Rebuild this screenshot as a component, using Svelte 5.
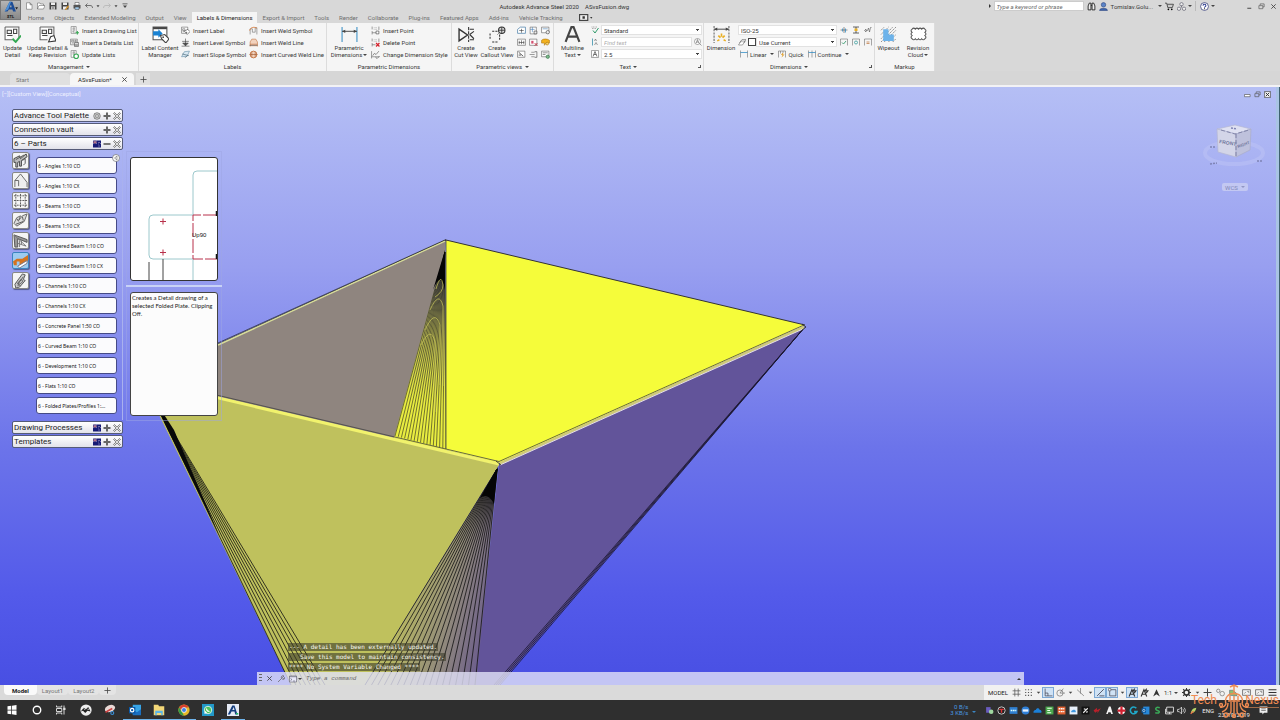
<script>
  const icons = {
    newdoc: '<path d="M3 1.500h7l4 4v9H3z M10 1.500v4h4" fill="#fff" stroke="#555"/>',
    open: '<path d="M1 14V2h5l1 2h6v3M1 14l3-7h12l-3 7z" fill="#fff" stroke="#555"/>',
    save: '<path d="M1 1h14v14H1z" fill="#444"/><path d="M4 1h8v5H4zM4 9h8v6H4z" fill="#eee"/><path d="M5 11h6M5 13h6" stroke="#444"/>',
    saveas: '<path d="M1 1h14v14H1z" fill="#444"/><path d="M4 1h8v5H4zM4 9h8v6H4z" fill="#eee"/><path d="M8 15l6-8 2 2-6 7z" fill="#e8a331" stroke="#8a5a10" stroke-width=".6"/>',
    print: '<path d="M4 1h8v5H4z" fill="#fff" stroke="#444"/><path d="M1 6h14v7H1z" fill="#555"/><path d="M4 10h8v5H4z" fill="#9fc7e8" stroke="#444"/>',
    undo: '<path d="M5 3L1 7l4 4M1 7h9c4 0 5 2 5 5" fill="none" stroke="#555" stroke-width="1.600"/>',
    redo: '<path d="M11 3l4 4-4 4M15 7H6c-4 0-5 2-5 5" fill="none" stroke="#b5b5b5" stroke-width="1.600"/>',
    caret: '<path d="M4 6h8l-4 5z" fill="#444"/>',
    caretbar: '<path d="M3 3h10v1.500H3zM4 7h8l-4 5z" fill="#444"/>',
    update: '<path d="M1 1h13v10M1 1v12h7" fill="#fff" stroke="#666"/><path d="M3 4h4v3H3zM9 3h3v4H9zM3 9h5" fill="none" stroke="#444"/><path d="M8 12l3 3 5-6" fill="none" stroke="#35a853" stroke-width="1.800"/>',
    updaterev: '<path d="M1 1h13v10M1 1v12h7" fill="#fff" stroke="#666"/><path d="M3 4h4v3H3zM9 3h3v4H9zM3 9h5" fill="none" stroke="#444"/><path d="M9 15l2-5 3-1 2 5z" fill="#fff" stroke="#333"/>',
    listd: '<path d="M2 1h9v12H2z" fill="#fff" stroke="#666"/><path d="M4 4h5M4 7h5M4 10h3M7 1v12" stroke="#777"/><path d="M13 9v6M10 12h6" stroke="#35a853" stroke-width="2"/>',
    listt: '<path d="M1 2h12v10H1z" fill="#fff" stroke="#555"/><path d="M3 4h4v3H3zM9 4h2v3H9zM3 9h4" fill="none" stroke="#555"/><path d="M8 8h7v7H8z" fill="#fff" stroke="#333"/><path d="M9 11h5M9 13h5" stroke="#333"/>',
    listu: '<path d="M2 1h9v12H2z" fill="#fff" stroke="#666"/><path d="M4 4h5M4 7h5M7 1v12" stroke="#777"/><circle cx="11" cy="11" r="4" fill="#fff" stroke="#35a853" stroke-width="2"/>',
    content: '<path d="M1 1h13v12H1z" fill="#fff" stroke="#555"/><path d="M1 1h13v2H1z" fill="#444"/><path d="M1 5h5V3l4 4-4 4V9H1z" fill="#1a82d2"/><path d="M8 9l4-1 4 4-3 4-4-4z" fill="#fff" stroke="#444"/><circle cx="10.500" cy="10.500" r=".8" fill="#444"/>',
    label: '<path d="M1 2h11v11H1z" fill="#fff" stroke="#555"/><path d="M3 5h4v3H3zM3 10h3" fill="none" stroke="#555"/><path d="M6 9l6-3 4 4-5 5z" fill="#fff" stroke="#333"/><circle cx="10" cy="11" r="1" fill="#333"/>',
    level: '<path d="M8 1v12M3 9l5 5 5-5zM1 14.500h14M2 6h12" fill="#666" stroke="#333"/>',
    slope: '<path d="M1 12L6 3l9-1-4 9z" fill="#d9e8f2" stroke="#5b87a3"/><path d="M2 7l12 3M7 14l4-4" stroke="#356"/>',
    weld: '<path d="M2 15V5h4v6h5V3h3v12" fill="none" stroke="#666"/><path d="M1 8c2-6 8-7 13-4" fill="none" stroke="#d97a3a" stroke-width="1.600"/>',
    weldline: '<path d="M2 15V7l3-5h7l3 5v8M2 11h13" fill="#f2d2bd" stroke="#c06a34"/><path d="M1 13h14" stroke="#333"/>',
    weldcurve: '<circle cx="8" cy="8" r="6" fill="#f2d2bd" stroke="#c06a34" stroke-width="1.500"/><path d="M1 8h14M5 4v8M11 4v8" stroke="#9a4c20"/>',
    pdim: '<path d="M1 1v14M15 1v14" stroke="#3a8fc4"/><path d="M1 5h14" stroke="#555"/><path d="M1 5l3-1.500v3zM15 5l-3-1.500v3z" fill="#444"/>',
    ptins: '<path d="M2 1v5M2 9v6M14 1v6M2 12h12" stroke="#555"/><path d="M5 3h6M5 6h6" stroke="#777" stroke-dasharray="1 1"/><path d="M9 9h5v5H9z" fill="#fff" stroke="#333"/>',
    ptdel: '<path d="M2 1v5M2 9v6M14 1v6M2 12h6" stroke="#555"/><path d="M5 3h6M5 6h6" stroke="#777" stroke-dasharray="1 1"/><path d="M9 9l6 6M15 9l-6 6" stroke="#d3202a" stroke-width="2.200"/>',
    ptsty: '<path d="M1 2v13M1 12h14" stroke="#555"/><path d="M3 10l3-4 3 2 5-6" fill="none" stroke="#444"/><path d="M8 13l3 2 4-4" fill="none" stroke="#333"/>',
    cut: '<path d="M1 3v11l8-5.500z" fill="none" stroke="#333" stroke-width="1.300"/><path d="M10 1v14" stroke="#333" stroke-dasharray="3 1"/><path d="M11 3h4M11 13h4M11 8l4 4M11 8l4-3" stroke="#333"/>',
    callout: '<path d="M3 5h5M1 7v6M3 15h6M10 8v5" fill="none" stroke="#333" stroke-dasharray="2 1"/><circle cx="12" cy="4" r="3" fill="#ddd" stroke="#333"/><path d="M9 4h6M12 1v6M9 7l-1 1" stroke="#333" stroke-width=".8"/>',
    v1: '<path d="M1 6l5-4h9v11H1z" fill="#fff" stroke="#4b7fa8" stroke-width="1.300"/><path d="M4 8h8M8 5v7" stroke="#333"/>',
    v2: '<path d="M2 2h11v12H2z" fill="#fff" stroke="#555"/><path d="M2 6h8M6 2v9" stroke="#3a78b0"/><path d="M9 9h5v5H9z" fill="#eee" stroke="#333"/>',
    v3: '<path d="M1 2h13v10H1z" fill="#fff" stroke="#555"/><path d="M3 5h9" stroke="#3a78b0"/><circle cx="12" cy="11" r="3" fill="#eee" stroke="#333"/>',
    v4: '<path d="M1 2h14v11H1z" fill="#fff" stroke="#555"/><path d="M4 5v6M8 4v7M12 5v6M3 8h10" stroke="#333"/>',
    v5: '<path d="M1 2h13v11H1z" fill="#fff" stroke="#555"/><path d="M4 5h4v5H4z" fill="#d35070"/><path d="M10 9l5 5M15 9l-5 5" stroke="#c03040" stroke-width="1.600"/>',
    v6: '<path d="M1 4c3-3 10-3 14 0v5H9l-3 4V9H1z" fill="#f3b21f" stroke="#a8700a"/><circle cx="11" cy="10" r="2.500" fill="#f8d36a" stroke="#a8700a"/>',
    v7: '<path d="M1 2h13v11H1z" fill="#fff" stroke="#555"/><path d="M3 4l8 7M3 9h4" stroke="#333" stroke-width="1.400"/>',
    v8: '<path d="M1 8h9M4 4h6M4 12h6" stroke="#555"/><path d="M10 3h4v10h-4" fill="none" stroke="#333"/>',
    v9: '<path d="M1 2h13v10H1z" fill="#fff" stroke="#555"/><path d="M3 5h9M3 8h5" stroke="#444"/><circle cx="12" cy="12" r="3" fill="#7bb88a" stroke="#2c6b40"/>',
    mtext: '<path d="M1.500 15L7 1h2l5.500 14M4 10h8" fill="none" stroke="#444" stroke-width="2"/>',
    spell: '<path d="M1 2h12M2 5h9" stroke="#666" stroke-dasharray="2 1"/><path d="M4 9l4 5 7-10" fill="none" stroke="#2f9a6a" stroke-width="2"/>',
    talign: '<path d="M3 1v14" stroke="#2b8aa5" stroke-width="1.500"/><path d="M7 6l2-4 2 4M7 14l3-5 3 5" fill="none" stroke="#444"/>',
    tbox: '<path d="M1 1h14v14H1z" fill="#fff" stroke="#555"/><path d="M4 13l4-10 4 10M5.500 9h5" fill="none" stroke="#333" stroke-width="1.300"/>',
    dim: '<path d="M1 0v16M15 0v16" stroke="#666" stroke-dasharray="2 1"/><path d="M1 3h14" stroke="#555"/><path d="M1 3l3-1.500v3zM15 3l-3-1.500v3z" fill="#444"/><path d="M4 14l2-1M5 9l2 2M8 7v3M11 9l-2 2M12 14l-2-1" stroke="#eab024" stroke-width="1.500"/>',
    layers: '<path d="M1 14h8l5-8H6zM3 10l5-7h8l-4 7" fill="#fff" stroke="#555"/>',
    d1: '<path d="M1 8h14M8 2v12" stroke="#333"/><path d="M5 5v6M11 5v8" stroke="#2b8ac4" stroke-width="1.500"/>',
    d2: '<path d="M2 2h12M2 14h12M8 2v12" stroke="#333" stroke-width="1.500"/><path d="M5 5h6v5H5z" fill="#eab024"/>',
    d3: '<path d="M1 9l3-3v6zM4 9h3l2-5 2 8 2-9h2" fill="none" stroke="#555" stroke-width="1.200"/>',
    d4: '<path d="M1 15V2h14v13" fill="none" stroke="#555"/><path d="M4 9l3 3 5-6" fill="none" stroke="#2f9a6a" stroke-width="1.700"/>',
    d5: '<path d="M1 15V2h14v13" fill="none" stroke="#555"/><circle cx="8" cy="9" r="3" fill="none" stroke="#2f9a9a" stroke-width="1.500"/>',
    d6: '<path d="M1 15V2h14v13" fill="none" stroke="#555"/><path d="M5 8h6M5 11h6" stroke="#c07840" stroke-width="1.500"/>',
    linear: '<path d="M1 1v14M15 1v14" stroke="#555"/><path d="M1 5h14" stroke="#2b8ac4" stroke-width="1.500"/>',
    quick: '<path d="M1 15V2h14v13M5 2v5M10 2v4" fill="none" stroke="#555"/><path d="M9 6l-3 4h3l-2 5 6-6H9l2-3z" fill="#e09a20"/>',
    cont: '<path d="M1 1v14M8 1v14M15 1v14" stroke="#555"/><path d="M1 5h14" stroke="#2b8ac4" stroke-width="1.500"/>',
    wipeout: '<g stroke="#777" stroke-width=".8" stroke-dasharray="1.500 .8"><path d="M1 4l3-3M1 8l7-7M1 12L12 1M1 15L15 1M4 15L15 4M8 15l7-7M12 15l3-3"/></g><path d="M3 3h5v5h5v6H3z" fill="#6db3ea"/>',
    cloud: '<path d="M2 3q1.500-2 3 0q1.500-2 3 0q1.500-2 3 0q1.500-2 3 0q2 1.500 0 3q2 1.500 0 3q2 1.500 0 3q-1.500 2-3 0q-1.500 2-3 0q-1.500 2-3 0q-1.500 2-3 0q-2-1.500 0-3q-2-1.500 0-3q-2-1.500 0-3z" fill="#fff" stroke="#555"/>',
    find: '<circle cx="7" cy="7" r="6" fill="#fff" stroke="#555"/><path d="M4.500 10L7 3l2.500 7M5 8h4M11 11l4 4" fill="none" stroke="#444"/>',
    binoc: '<path d="M2 14V7l2-5h3v12zM14 14V7l-2-5H9v12zM7 6h2" fill="#eee" stroke="#222" stroke-width="1.600"/>',
    user: '<circle cx="8" cy="5" r="4" fill="#5b84c8" stroke="#28407a"/><path d="M1 15c0-5 14-5 14 0z" fill="#3d66b0" stroke="#28407a"/>',
    cart: '<path d="M0 2h3l2 8h8l2-6H4" fill="#ccc" stroke="#333" stroke-width="1.400"/><circle cx="6" cy="13" r="1.500"/><circle cx="12" cy="13" r="1.500"/>',
    share: '<circle cx="8" cy="4" r="3" fill="#eee" stroke="#445"/><circle cx="3.500" cy="12" r="3" fill="#eee" stroke="#445"/><circle cx="12.500" cy="12" r="3" fill="#eee" stroke="#445"/><path d="M8 6v4" stroke="#445"/>',
    help: '<circle cx="8" cy="8" r="7" fill="#fff" stroke="#444a80" stroke-width="1.500"/><path d="M5.500 6.500c0-4 5-3 5 0 0 2-2.500 1.500-2.500 3.500" fill="none" stroke="#2b3a90" stroke-width="1.800"/><circle cx="8" cy="12" r="1"/>',
    min: '<path d="M3 12h9" stroke="#333" stroke-width="2"/>',
    vmin: '<path d="M1 8h13v5H1z" fill="#fff" stroke="#555" stroke-width="1.500"/>',
    restore: '<path d="M5 5V2h9v7h-3M2 6h9v7H2z" fill="none" stroke="#555" stroke-width="1.500"/>',
    vclose: '<path d="M1 1h14v14H1z" fill="#eee" stroke="#444" stroke-width="1.500"/><path d="M4 4l8 8M12 4l-8 8" stroke="#333" stroke-width="2.200"/>',
    close: '<path d="M3 3l10 10M13 3L3 13" stroke="#444" stroke-width="2"/>',
    gearbox: '<circle cx="8" cy="8" r="6.500" fill="#ddd" stroke="#666" stroke-width="1.500"/><circle cx="8" cy="8" r="3" fill="none" stroke="#777" stroke-width="1.500"/><path d="M3 3l2 2M13 3l-2 2M3 13l2-2M13 13l-2-2" stroke="#666"/>',
    plusb: '<path d="M6 1h4v5h5v4h-5v5H6v-5H1V6h5z" fill="#666"/>',
    minusb: '<path d="M1 6h14v4H1z" fill="#777"/>',
    xb: '<path d="M1 3l2-2 5 5 5-5 2 2-5 5 5 5-2 2-5-5-5 5-2-2 5-5z" fill="#ddd" stroke="#555" stroke-width="1.300"/>',
    flag: '<path d="M0 1h16v14H0z" fill="#171a75"/><path d="M0 1l8 7M8 1L0 8M4 1v7M0 4.500h8" stroke="#cfd3ee" stroke-width="1"/><path d="M4 1v7M0 4.500h8" stroke="#c33" stroke-width=".8"/><path d="M12 4v2M12 11v2M10 8h1M14 7h1" stroke="#fff" stroke-width="1.400"/>',
    collapse: '<circle cx="8" cy="8" r="7" fill="#fff" stroke="#777" stroke-width="1.500"/><path d="M10 4v8L5 8z" fill="#eee" stroke="#555"/>',
    p1: '<path d="M1 6l6-3 1 3 6-5 1 3-6 4v6H7V9l-2 1v5H3v-5H1z" fill="#bbb" stroke="#444"/><path d="M10 8l3-2v5l-2 2M3 7l9-5" fill="none" stroke="#555"/>',
    p2: '<path d="M2 15V8l6-7 7 9v5M2 8h4v6" fill="#eee" stroke="#666"/>',
    p3: '<path d="M3 1v14M8 1v14M13 1v14M1 3h14M1 8h14M1 13h14" stroke="#555" stroke-dasharray="2 1"/>',
    p4: '<path d="M1 11l3-6 4-2-2 5 4-5 5-2-3 8-8 5z" fill="#ddd" stroke="#666"/><path d="M3 12l8-3M4 6l2 3M10 4l1 4" stroke="#555"/>',
    p5: '<path d="M1 2l14 5v3L5 6v9H2z" fill="#999" stroke="#555"/><path d="M7 8v7M5 11l9 3M1 2l13 12M9 8v4" stroke="#777"/>',
    p6: '<path d="M0 9l4-3h6l6-4v6l-5 5H7V9H4v4H1z" fill="#d5731e"/><path d="M5 14l10-6v3l-8 5z" fill="#fff" stroke="#778"/>',
    p7: '<path d="M2 12L10 1l3 1-2 5 2 1-6 7-4 1z" fill="#ccc" stroke="#555"/><path d="M5 12l6-8M5 14c1-3 6-3 5-6-2-2-4 1-4 3M4 10l4 4" fill="none" stroke="#555"/>',
    wrench: '<path d="M2 14l7-7M9 7c-2-4 2-7 5-5l-3 3 2 2 3-2c0 4-4 5-7 2" fill="none" stroke="#666" stroke-width="1.500"/>',
    prompt: '<path d="M1 2h14v12H1z" fill="#e8e8f8" stroke="#445"/><path d="M1 3.500h14" stroke="#445"/><path d="M3 7l3 2-3 2M8 12h4" fill="none" stroke="#445"/>',
    grid: '<path d="M5 1v14M11 1v14M1 5h14M1 11h14" stroke="#555" stroke-width="1.300"/>',
    dots: '<path d="M2 3h13M2 8h13M2 13h13" stroke="#555" stroke-width="2" stroke-dasharray="2 3"/>',
    infer: '<path d="M2 1v13h13M2 9h5v5" fill="none" stroke="#445" stroke-width="1.300"/>',
    polar: '<circle cx="7" cy="9" r="5.500" fill="none" stroke="#555"/><path d="M7 9h9M7 9l6-8" stroke="#555"/>',
    iso: '<path d="M2 3l12 11M8 0v10" stroke="#777" stroke-width="1.300"/>',
    track: '<path d="M2 14L14 2M6 14h9" stroke="#445" stroke-width="1.500"/>',
    snap: '<path d="M3 3h11v11H3z" fill="none" stroke="#445" stroke-width="1.300"/><path d="M1 1h4v4H1z" fill="#fff" stroke="#445"/>',
    anno: '<path d="M2 15L7 3l5 12M4 11h6M12 1l-3 4h5l-3 4" fill="none" stroke="#333" stroke-width="2"/>',
    tri: '<path d="M2 15L8 2l6 13-6-4z" fill="#333"/>',
    gear: '<circle cx="8" cy="8" r="4.500" fill="none" stroke="#333" stroke-width="3"/><path d="M8 0v4M8 12v4M0 8h4M12 8h4M2 2l3 3M11 11l3 3M14 2l-3 3M2 14l3-3" stroke="#333" stroke-width="1.800"/>',
    plus: '<path d="M8 1v14M1 8h14" stroke="#444" stroke-width="1.800"/>',
    isolate: '<circle cx="4" cy="5" r="3" fill="none" stroke="#555"/><circle cx="11" cy="10" r="4" fill="none" stroke="#555"/>',
    gfx: '<path d="M1 13V4h6l7 6v4z" fill="#8fbf70" stroke="#567"/>',
    box: '<path d="M1 3h14v10H1z" fill="none" stroke="#555" stroke-width="1.300"/><path d="M4 10l3-3M9 6h3v3" stroke="#555" fill="none"/>',
    menu: '<path d="M1 3h14M1 8h14M1 13h14" stroke="#333" stroke-width="1.800"/>',
    win: '<path d="M2 3l5-.7v5.200H2zM8 2.200l6-1v6.300H8zM2 8.500h5v5.200L2 13zM8 8.500h6v6.300l-6-1z" fill="#fff"/>',
    ring: '<circle cx="8" cy="8" r="5" fill="none" stroke="#fff" stroke-width="1.800"/>',
    taskview: '<path d="M2 2v2h7V2M2 14v-2h7v2M2 6h7v4H2zM12 2v12" fill="none" stroke="#ddd" stroke-width="1.300"/><path d="M11 5h3v3h-3z" fill="#ddd"/>',
    bird: '<circle cx="8" cy="8" r="7.500" fill="#eee"/><path d="M1 10l4-5 3 2 3-3 3 6-4-1-3 3-3-3z" fill="#222"/><path d="M5 6l2 2M10 7h2" stroke="#fff"/>',
    snip: '<ellipse cx="8" cy="6" rx="7" ry="4.500" fill="#e9d9d6" transform="rotate(-20 8 6)"/><path d="M2 11l9-5" stroke="#c44" stroke-width="2"/><circle cx="11" cy="12" r="2" fill="none" stroke="#3a8fd8" stroke-width="1.500"/>',
    outlook: '<path d="M5 1h11v13H5z" fill="#37a4e6"/><path d="M5 7l5.500 4L16 7v8H5z" fill="#1a6fc0"/><path d="M0 4h8.500v8.500H0z" fill="#0a58a8"/><circle cx="4.200" cy="8.200" r="2.300" fill="none" stroke="#fff" stroke-width="1.500"/>',
    folder: '<path d="M1 1h6l1 2h7v12H1z" fill="#f3d778"/><path d="M3 9h10v6h-2v-3H5v3H3z" fill="#59b5e8"/>',
    chrome: '<circle cx="8" cy="8" r="7.500" fill="#e5b92a"/><path d="M1.500 4.500a7.500 7.500 0 0 1 13 0H8L5 9z" fill="#d8402f"/><path d="M1.500 4.500L5.500 11l2.500 4.500A7.500 7.500 0 0 1 1.500 4.500z" fill="#2f9a4a"/><circle cx="8" cy="8" r="3.300" fill="#3f7ee0" stroke="#fff"/>',
    whats: '<path d="M0 0h16v16H0z" fill="#2299c8"/><circle cx="8" cy="8" r="5" fill="#4bc35c" stroke="#fff"/><path d="M3 13l1-4 3 3z" fill="#fff"/><path d="M6 6c0 3 2 4 4 4" fill="none" stroke="#fff" stroke-width="1.400"/>',
    acad: '<path d="M0 0h16v16H0z" fill="#e6ebf5"/><path d="M1 14L7 2h3l4 12h-3l-1-4H6l-2 4zM7 8h3L9 4z" fill="#17407f"/><path d="M12 12h3v2h-3z" fill="#2b6"/>',
    net: '<path d="M3 2h12v9H3zM8 11v3M5 14h7M1 5v9h4" fill="none" stroke="#eee" stroke-width="1.500"/>',
    vol: '<path d="M1 6h3l4-4v12l-4-4H1z" fill="none" stroke="#eee" stroke-width="1.300"/><path d="M10 5c2 2 2 4 0 6M12.500 3c3 3 3 7 0 10" fill="none" stroke="#eee" stroke-width="1.300"/>',
    note: '<path d="M1 1h14v11H9l-3 3v-3H1z" fill="#eee"/><path d="M4 5h8M4 8h8" stroke="#333"/>'
  };

  const tabs = ['Home', 'Objects', 'Extended Modeling', 'Output', 'View', 'Labels & Dimensions', 'Export & Import', 'Tools', 'Render', 'Collaborate', 'Plug-ins', 'Featured Apps', 'Add-ins', 'Vehicle Tracking'];
  const quick = ['newdoc', 'open', 'save', 'saveas', 'print', 'undo', 'caret', 'redo', 'caret', 'caretbar'];
  const viewIcons = ['v1', 'v2', 'v3', 'v4', 'v5', 'v6', 'v7', 'v8', 'v9'];
  const parts = ['Angles 1:10 CO', 'Angles 1:10 CX', 'Beams 1:10 CO', 'Beams 1:10 CX', 'Cambered Beam 1:10 CO', 'Cambered Beam 1:10 CX', 'Channels 1:10 CO', 'Channels 1:10 CX', 'Concrete Panel 1:50 CO', 'Curved Beam 1:10 CO', 'Development 1:10 CO', 'Flats 1:10 CO', 'Folded Plates/Profiles 1:...'];
  const categories = ['p1', 'p2', 'p3', 'p4', 'p5', 'p6', 'p7'];
  const status = ['grid', 'dots', 'caret', '*infer', 'polar', 'caret', 'iso', 'caret', '*track', '*snap', 'caret', '*anno', 'anno', 'tri'];
  const status2 = ['gear', 'caret', 'plus', 'isolate', 'gfx', 'box'];
  const apps = ['win', 'ring', 'taskview', 'bird', 'snip', 'outlook', 'folder', 'chrome', 'whats', 'acad'];
  const running = ['outlook', 'folder', 'chrome', 'acad'];
  const tray = [
    '<path d="M2 2h8v10H2z" fill="#6a5cc0"/><circle cx="11" cy="10" r="4" fill="#9fd8a0"/>',
    '<circle cx="8" cy="8" r="6.500" fill="#222" stroke="#ddd" stroke-width="1.500"/><path d="M4 6h8M8 6v6" stroke="#d33" stroke-width="2.500"/>',
    '<path d="M1 2h14v12H1z" fill="#2f7fd0"/><path d="M3 8h10" stroke="#dff" stroke-width="3" stroke-dasharray="3 1"/>',
    '<circle cx="8" cy="8" r="7" fill="#2f80d8"/><path d="M3 6h10v4H3z" fill="#e8f2ff"/>',
    '<path d="M1 12c-1-4 3-5 4-5 1-4 6-4 7 0 4 0 4 5 2 5z" fill="#1b80d8"/>',
    '<path d="M1 1h14v14H1z" fill="#4aa84c"/><path d="M4 4h8M4 8h5M4 12h7" stroke="#efe" stroke-width="2"/>',
    '<path d="M1 1h14v14H1z" fill="#e06030"/><path d="M3 5h10M3 10h10" stroke="#fff" stroke-width="2.500" stroke-dasharray="3 1"/>',
    '<path d="M1 1h14v14H1z" fill="#e8f0fa"/><path d="M4 11c-1-3 2-3 3-4 4-2 6 2 5 4z" fill="#3f98e0"/>',
    '<path d="M1 1h14v14H1z" fill="#111"/><path d="M4 12l8-8M5 5l3 1M9 11l3-1" stroke="#eee" stroke-width="2"/>',
    '<path d="M1 8l6-5v4l7-3-6 9V9l-4 3z" fill="#b8202a"/>',
    '<path d="M2 14L7 1h3l4 13h-3l-1-3H6l-1 3z" fill="#f2f2f2"/>',
    '<circle cx="8" cy="8" r="6.500" fill="#fff"/><path d="M8 1v14M1 8h14" stroke="#d42030" stroke-width="4"/>',
    '<path d="M13 4a6 6 0 1 0 1 6H9" fill="none" stroke="#20a8c8" stroke-width="2.800"/>',
    '<path d="M4 1h11v14H4z" fill="#2888d8"/><path d="M1 4h8v8H1z" fill="#0b58a0"/><circle cx="5" cy="8" r="2" fill="none" stroke="#fff"/>',
    '<path d="M12 3c-8-3-9 4-4 5s4 6-4 4" fill="none" stroke="#3aa858" stroke-width="2.800"/>',
    icons.net, icons.vol,
    '<path d="M3 13c2-8 5-9 10-10-1 5-3 8-8 10z" fill="#b8d86a"/><path d="M3 14l5-5" stroke="#e64" stroke-width="2"/>'
  ];

  // Bend lines: each pair is joined from a shared apex to a spread of end points.
  const fan = (n, ax, ay, x1, y1, x2, y2, ease = 1) =>
    Array.from({ length: n }, (_, i) => {
      const t = Math.pow(i / (n - 1), ease);
      return `M${ax} ${ay}L${(x1 + (x2 - x1) * t).toFixed(1)} ${(y1 + (y2 - y1) * t).toFixed(1)}`;
    }).join('');
  const frontFan = fan(18, 497, 469, 365, 685, 475, 685);
  const leftFan = fan(8, 154, 400, 291, 685, 325, 685);
  const backFan = fan(17, 445, 252, 395, 436, 446, 449);
  const rightFan = fan(4, 804, 328, 500, 685, 494, 685);
</script>

{#snippet ic(name, size = 8)}
  <svg class="ic s{size}" viewBox="0 0 16 16" aria-hidden="true">{@html icons[name]}</svg>
{/snippet}

{#snippet big(name, a, b, arrow = false)}
  <button class="big">{@render ic(name, 17)}<span>{a}</span><span>{b}{#if arrow}<i class="dd"></i>{/if}</span></button>
{/snippet}

{#snippet list(rows)}
  <div class="list">
    {#each rows as [icon, label]}<button class="row">{@render ic(icon, 9)}{label}</button>{/each}
  </div>
{/snippet}

{#snippet head(label, flag, sign)}
  <div class="phead">
    <span>{label}</span>
    {#if flag}<button aria-label="Language">{@render ic(flag)}</button>{/if}
    <button aria-label="Toggle {label}">{@render ic(sign)}</button>
    <button aria-label="Close {label}">{@render ic('xb')}</button>
  </div>
{/snippet}

<div class="app">
  <header class="top">
    <button class="logo" aria-label="Application menu">
      <svg viewBox="0 0 20 20"><path d="M1 15L8 1h4l5 14h-4l-1-3H7l-2 3zM8 9h3l-1-4z" fill="#1c4c96" /><path d="M1 15L8 1h2L6 12z" fill="#4f92d8" /><path d="M16 9h4l-2 3z" fill="#222" /></svg>
      <b>STL</b>
    </button>
    <div class="heads">
      <div class="title">
        <div class="quick">{#each quick as q}<button class:thin={q === 'caret'} aria-label={q}>{@render ic(q)}</button>{/each}</div>
        <div class="name"><span>Autodesk Advance Steel 2020</span><span>ASvsFusion.dwg</span></div>
        <div class="account">
          <i class="right"></i>
          <input class="search" aria-label="Search" placeholder="Type a keyword or phrase" />
          <button aria-label="Find">{@render ic('binoc', 9)}</button>
          <button class="user">{@render ic('user', 9)}Tomislav.Golu...<i class="dd"></i></button>
          <button aria-label="Store">{@render ic('cart', 9)}</button>
          <button aria-label="Share">{@render ic('share', 9)}<i class="dd"></i></button>
          <button class="help" aria-label="Help">{@render ic('help', 9)}<i class="dd"></i></button>
        </div>
        <div class="winbtns">
          <button aria-label="Minimize">{@render ic('min', 7)}</button>
          <button aria-label="Restore">{@render ic('restore', 7)}</button>
          <button aria-label="Close">{@render ic('close', 7)}</button>
        </div>
      </div>
      <nav class="tabs">
        {#each tabs as t}<button class:on={t === 'Labels & Dimensions'}>{t}</button>{/each}
        <button aria-label="Ribbon display" class="disp"><svg viewBox="0 0 12 6"><rect x=".5" y=".5" width="7" height="5" fill="#eee" stroke="#444" /><path d="M3 2h2v2H3zM9.500 2.500h2l-1 1.500z" fill="#333" /></svg></button>
      </nav>
    </div>
  </header>

  <div class="ribbon">
    <section class="panel w1">
      <div class="body">
        {@render big('update', 'Update', 'Detail')}
        {@render big('updaterev', 'Update Detail &', 'Keep Revision')}
        {@render list([['listd', 'Insert a Drawing List'], ['listt', 'Insert a Details List'], ['listu', 'Update Lists']])}
      </div>
      <footer>Management <i class="dd"></i></footer>
    </section>
    <section class="panel w2">
      <div class="body">
        {@render big('content', 'Label Content', 'Manager')}
        {@render list([['label', 'Insert Label'], ['level', 'Insert Level Symbol'], ['slope', 'Insert Slope Symbol']])}
        {@render list([['weld', 'Insert Weld Symbol'], ['weldline', 'Insert Weld Line'], ['weldcurve', 'Insert Curved Weld Line']])}
      </div>
      <footer>Labels</footer>
    </section>
    <section class="panel w3">
      <div class="body">
        {@render big('pdim', 'Parametric', 'Dimensions', true)}
        {@render list([['ptins', 'Insert Point'], ['ptdel', 'Delete Point'], ['ptsty', 'Change Dimension Style']])}
      </div>
      <footer>Parametric Dimensions</footer>
    </section>
    <section class="panel w4">
      <div class="body">
        {@render big('cut', 'Create', 'Cut View')}
        {@render big('callout', 'Create', 'Callout View')}
        <div class="nine">{#each viewIcons as v}<button aria-label="View tool">{@render ic(v, 9)}</button>{/each}</div>
      </div>
      <footer>Parametric views <i class="dd"></i></footer>
    </section>
    <section class="panel w5">
      <div class="body">
        {@render big('mtext', 'Multiline', 'Text', true)}
        <div class="fields">
          <label>{@render ic('spell')}<select aria-label="Text style"><option>Standard</option></select></label>
          <label>{@render ic('talign')}<input aria-label="Find text" placeholder="Find text" />{@render ic('find')}</label>
          <label>{@render ic('tbox')}<select aria-label="Text height"><option>2.5</option></select></label>
        </div>
      </div>
      <footer>Text <i class="dd"></i><i class="launch"></i></footer>
    </section>
    <section class="panel w6">
      <div class="body">
        {@render big('dim', 'Dimension', '')}
        <div class="fields">
          <label><select aria-label="Dimension style"><option>ISO-25</option></select></label>
          <label>{@render ic('layers')}<i class="swatch"></i><select aria-label="Dimension layer"><option>Use Current</option></select></label>
          <div class="links">
            <button>{@render ic('linear')}Linear<i class="dd"></i></button>
            <button>{@render ic('quick')}Quick</button>
            <button>{@render ic('cont')}Continue<i class="dd"></i></button>
          </div>
        </div>
        <div class="nine">{#each ['d1', 'd2', 'd3', 'd4', 'd5', 'd6'] as v}<button aria-label="Dimension tool">{@render ic(v)}</button>{/each}</div>
      </div>
      <footer>Dimensions <i class="dd"></i><i class="launch"></i></footer>
    </section>
    <section class="panel w7">
      <div class="body">
        {@render big('wipeout', 'Wipeout', '')}
        {@render big('cloud', 'Revision', 'Cloud', true)}
      </div>
      <footer>Markup</footer>
    </section>
  </div>

  <div class="docs">
    <button class="doc">Start</button>
    <button class="doc on">ASvsFusion* {@render ic('close', 7)}</button>
    <button class="add" aria-label="New tab">{@render ic('plus', 7)}</button>
  </div>

  <main class="canvas">
    <svg class="scene" viewBox="0 87 1280 598" preserveAspectRatio="xMidYMid slice" aria-hidden="true">
      <defs>
        <linearGradient id="sky" x1="0" y1="0" x2="0" y2="1"><stop offset="0" stop-color="#b5bff5" /><stop offset=".3" stop-color="#989ff0" /><stop offset=".6" stop-color="#6c74ea" /><stop offset=".85" stop-color="#535aea" /><stop offset="1" stop-color="#484fe3" /></linearGradient>
        <linearGradient id="bend" x1="400" x2="490" y1="620" y2="640" gradientUnits="userSpaceOnUse"><stop offset="0" stop-color="#b7b763" /><stop offset=".5" stop-color="#928b7b" /><stop offset="1" stop-color="#67588f" /></linearGradient>
        <linearGradient id="inner" x1="0" y1="280" x2="0" y2="400" gradientUnits="userSpaceOnUse"><stop offset="0" stop-color="#8d876c" /><stop offset=".5" stop-color="#c5c452" /><stop offset="1" stop-color="#e9ed40" /></linearGradient>
      </defs>
      <rect x="0" y="87" width="1280" height="598" fill="url(#sky)" />
      <path d="M446 240L142 379L395 440L445 252z" fill="#8f857f" />
      <path d="M445 250L394 438L447 451z" fill="url(#inner)" />
      <path d={backFan} stroke="#222" stroke-width=".6" />
      <path d="M445 250L433 290q8-20 12 0z" fill="#050505" />
      <path d="M436 289q5-17 7-4q0 7-8 12M430 310q9-20 13-4v80M425 330q10-22 15-5v60M421 345q10-20 14-3v70" fill="none" stroke="#cbc95c" stroke-width=".7" />
      <path d="M446 240L805 325L499 463L446 450z" fill="#f5fc3a" />
      <path d="M446 240V449" stroke="#444" stroke-width=".8" />
      <path d="M142 379L446 240L805 325" fill="none" stroke="#333" stroke-width="1" />
      <path d="M218 345L445 241" stroke="#d7dc9a" stroke-width="1.500" />
      <path d="M218 343L446 239.500" stroke="#222" stroke-width=".7" />
      <path d="M499 464L805 327L499 685H475z" fill="#62549a" />
      <path d="M142 380L499 465L365 685H291z" fill="#bfc15d" />
      <path d="M498 467L365 685H476z" fill="url(#bend)" />
      <path d={frontFan} stroke="#111" stroke-width=".8" />
      <path d={leftFan} stroke="#111" stroke-width=".8" />
      <path d="M152 396L161 416L220 537L174 430z" fill="#080808" />
      <path d="M498 467L480 498q8-6 14 6z" fill="#050505" />
      <path d={rightFan} stroke="#1a1730" stroke-width=".8" />
      <path d="M142 380L499 464" stroke="#f1f26d" stroke-width="3" />
      <path d="M142 377.500L499 461.500L804 325" fill="none" stroke="#444" stroke-width=".8" />
      <path d="M500 463.500L804 327" stroke="#cfca78" stroke-width="2.500" />
      <path d="M500 465L804 328.500" stroke="#e5dfe6" stroke-width="1" />
      <path d="M496 461l5 4M802 324l4 3l-4 3" fill="none" stroke="#222" stroke-width=".8" />
    </svg>

    <div class="viewlabel">[&minus;][Custom View][Conceptual]</div>
    <div class="viewbtns">{@render ic('vmin', 7)}{@render ic('restore', 7)}{@render ic('vclose', 7)}</div>
    <div class="edge"></div>

    <div class="cube">
      <svg viewBox="0 0 70 50" aria-hidden="true">
        <ellipse cx="34" cy="32" rx="29" ry="11" fill="none" stroke="#c2c8f6" stroke-width="4" opacity=".4" />
        <path d="M17 8L35 4L51 8L36 13z" fill="#dfe1f2" stroke="#b5b8d2" stroke-width=".7" />
        <path d="M17 8L36 13V36L18 31z" fill="#d3d5e8" stroke="#b5b8d2" stroke-width=".7" />
        <path d="M51 8L36 13V36L50 29z" fill="#bec1dc" stroke="#a9acca" stroke-width=".7" />
        <path d="M21 9l14 4 14-4M36 13v22" fill="none" stroke="#73779c" stroke-width=".8" stroke-dasharray="4 2" />
        <text x="0" y="0" transform="translate(19 22) rotate(10)">FRONT</text>
        <text class="side" x="0" y="0" transform="translate(38 27) rotate(-20)">RIGHT</text>
        <path d="M10 26h5M57 40h5M10 43l7-1M31 7l6 1" stroke="#7f84b5" stroke-width="1.500" stroke-dasharray="2 1" />
      </svg>
      <button>WCS <i class="dd"></i></button>
    </div>

    <aside class="palette">
      {@render head('Advance Tool Palette', 'gearbox', 'plusb')}
      {@render head('Connection vault', '', 'plusb')}
      {@render head('6 – Parts', 'flag', 'minusb')}
      <div class="pbody">
        <div class="cats">{#each categories as c}<button class:on={c === 'p6'} aria-label="Category">{@render ic(c, 15)}</button>{/each}</div>
        <div class="parts">
          {#each parts as p}<button>6 - {p}</button>{/each}
          <span class="collapse">{@render ic('collapse')}</span>
        </div>
      </div>
      {@render head('Drawing Processes', 'flag', 'plusb')}
      {@render head('Templates', 'flag', 'plusb')}
    </aside>

    <aside class="preview">
      <svg class="thumb" viewBox="0 0 86 122" aria-hidden="true">
        <g fill="none" stroke="#9cc8cc"><path d="M86 13H66q-4 0-4 4V57M62 57H22q-4 0-4 4V97q0 4 4 4H62M62 101v21" /></g>
        <path d="M86 57H62V101H86" fill="none" stroke="#b8304a" stroke-dasharray="14 2" />
        <path d="M29 63.500h6M32 60.500v6M29 94.500h6M32 91.500v6" stroke="#b8304a" />
        <path d="M18 104v18M32 101v21" stroke="#444" />
        <path d="M85.500 53v5M85.500 96v5" stroke="#111" stroke-width="1.500" />
        <text x="61" y="79">Up90</text>
      </svg>
      <hr />
      <p>Creates a Detail drawing of a selected Folded Plate. Clipping Off.</p>
    </aside>

    <div class="cmd">
      <div class="log"><span>--- A detail has been externally updated.</span><span class="pad">Save this model to maintain consistency.</span><span>**** No System Variable Changed ****</span></div>
      <div class="cmdbar">
        <i class="grip"></i>
        <button aria-label="Close command line">{@render ic('close', 7)}</button>
        <button aria-label="Customize">{@render ic('wrench')}</button>
        <button aria-label="Recent commands">{@render ic('prompt')}<i class="dd"></i></button>
        <input aria-label="Command" placeholder="Type a command" />
        <i class="up"></i>
      </div>
    </div>
  </main>

  <div class="layout">
    <button class="lay on">Model</button><button class="lay">Layout1</button><button class="lay">Layout2</button>
    <button class="lay" aria-label="Add layout">{@render ic('plus', 7)}</button>
    <div class="status">
      <button class="model">MODEL</button>
      {#each status as s}<button class:thin={s === 'caret'} class:act={s[0] === '*'} aria-label="Status toggle">{@render ic(s.replace('*', ''), s === 'caret' ? 7 : 9)}</button>{/each}
      <button class="scale">1:1<i class="dd"></i></button>
      {#each status2 as s}<button class="wide" class:thin={s === 'caret'} aria-label="Status tool">{@render ic(s, s === 'caret' ? 7 : 9)}</button>{/each}
      <button class="wide" aria-label="Clean screen">{@render ic('box', 9)}</button>
      <button class="wide" aria-label="Customization">{@render ic('menu', 9)}</button>
    </div>
  </div>

  <footer class="task">
    <div class="apps">{#each apps as a}<button class:run={running.includes(a)} aria-label={a}>{@render ic(a, 12)}</button>{/each}</div>
    <div class="speed"><span>0 B/s</span><span>3 KB/s</span></div>
    <i class="down"></i>
    <div class="tray">{#each tray as t}<svg class="ic s9" viewBox="0 0 16 16" aria-hidden="true">{@html t}</svg>{/each}</div>
    <span class="lang">ENG</span>
    <time>23/10/2019</time>
    <button class="note" aria-label="Notifications">{@render ic('note', 9)}</button>
    <div class="mark">
      <span>Tech</span><span class="nexus">Nexus</span>
      <svg viewBox="0 0 32 34" aria-hidden="true"><g fill="none" stroke="#ef8b52" stroke-width="1.400"><path d="M16 1v9M12 3l4-2 4 2M8 20C4 6 28 6 24 20M8 20q-2 4-6 3M24 20q2 4 6 3M10 19q0 7-6 9M22 19q0 7 6 9M13 18v9q0 3-4 5M19 18v9q0 3 4 5M16 12v20M12 12v5M20 12v5M10 17h12" /><circle cx="3" cy="21" r="1.500" /><circle cx="29" cy="21" r="1.500" /><circle cx="8" cy="31" r="2" /><circle cx="24" cy="31" r="2" /><circle cx="16" cy="32" r="1.500" /></g></svg>
    </div>
  </footer>
</div>

<style>
  :global(body) { margin: 0; }
  .app { display: flex; flex-direction: column; min-height: 100vh; background: #d8d8d8; color: #383838; font: 6px/7px Roboto, "Open Sans", sans-serif; overflow: hidden; }
  .app :global(*) { box-sizing: border-box; }
  button { display: flex; align-items: center; justify-content: center; padding: 0; border: 0; background: none; color: inherit; font: inherit; white-space: nowrap; }
  input, select { min-width: 0; border: 0; border-radius: 0; background: none; color: inherit; font: inherit; padding: 0; outline: 0; }
  .ic { display: block; flex: none; }
  .s7 { width: 7px; height: 7px; }
  .s8 { width: 8px; height: 8px; }
  .s9 { width: 9px; height: 9px; }
  .s12 { width: 12px; height: 12px; }
  .s15 { width: 15px; height: 15px; }
  .s17 { width: 17px; height: 17px; }
  .dd { display: inline-block; flex: none; margin-left: 3px; border: 2px solid transparent; border-top-color: #444; border-bottom: 0; vertical-align: middle; }

  .top { display: flex; height: 23px; }
  .logo { flex-direction: column; width: 21px; height: 20px; border: 1px solid #777; background: linear-gradient(#b5b5b5, #888); }
  .logo svg { width: 18px; height: 14px; }
  .logo b { font-size: 4px; line-height: 4px; color: #111; }
  .heads { flex: 1; display: flex; flex-direction: column; min-width: 0; }
  .title { display: flex; height: 12px; align-items: center; }
  .quick { display: flex; flex: 0 0 38%; gap: 4px; padding-left: 4px; }
  .quick .thin { margin: 0 -2px; }
  .quick .thin .ic { width: 6px; }
  .name { display: flex; gap: 6px; color: #333; }
  .account { flex: 1; display: flex; justify-content: flex-end; align-items: center; gap: 3px; }
  .account button { height: 10px; }
  .account .dd { margin-left: 2px; }
  .right { border: 2px solid transparent; border-left-color: #333; border-right: 0; }
  .search { width: 90px; height: 10px; padding: 0 2px; background: #fff; border: 1px solid #ccc; font-style: italic; }
  .search::placeholder { color: #666; opacity: 1; }
  .user { gap: 3px; }
  .help { padding-left: 4px; border-left: 1px solid #bbb; }
  .winbtns { display: flex; gap: 5px; padding: 0 3px 0 31px; }
  .tabs { display: flex; height: 11px; color: #6e6e6e; }
  .tabs button { padding: 0 5px; height: 11px; }
  .tabs button:first-child { margin-left: 2px; }
  .tabs .on { background: #f5f5f5; color: #222; }
  .tabs .disp { padding-left: 11px; }
  .disp svg { width: 14px; height: 7px; }

  .ribbon { display: flex; height: 48px; align-self: flex-start; background: #f5f5f5; }
  .panel { display: flex; flex-direction: column; border-right: 1px solid #dcdcdc; }
  .w1 { width: 139px; } .w2 { width: 188px; } .w3 { width: 125px; } .w4 { width: 102px; } .w5 { width: 150px; } .w6 { width: 171px; } .w7 { width: 60px; }
  .body { flex: 1; display: grid; align-content: start; padding-top: 1px; }
  .w1 .body { grid-template-columns: 25px 45px 1fr; }
  .w2 .body { grid-template-columns: 42px 68px 1fr; }
  .w3 .body { grid-template-columns: 44px 1fr; }
  .w4 .body { grid-template-columns: 28px 34px 1fr; }
  .w5 .body { grid-template-columns: 37px 1fr; }
  .w6 .body { grid-template-columns: 34px minmax(0, 1fr) 36px; }
  .w7 .body { grid-template-columns: 27px 1fr; }
  .panel footer { position: relative; height: 9px; text-align: center; line-height: 9px; }
  .panel footer .dd { margin-left: 1px; }
  .launch { position: absolute; right: 2px; bottom: 3px; width: 3px; height: 3px; border: 1px solid #555; border-width: 0 1px 1px 0; }
  .big { flex-direction: column; justify-content: flex-start; padding-top: 2px; }
  .big span { height: 7px; }
  .big .ic { margin-bottom: 1px; }
  .big .dd { margin-left: 1px; }
  .list, .fields { display: grid; grid-template: repeat(3, 12px) / minmax(0, 1fr); }
  .row { justify-content: flex-start; gap: 3px; }
  .nine { display: grid; grid-template: repeat(3, 12px) / repeat(3, 12px); justify-content: center; }
  .fields label { display: flex; align-items: center; gap: 2px; padding-right: 1px; }
  .fields select, .fields input { flex: 1; height: 10px; padding-left: 2px; background-color: #fff; border: 1px solid #e2e2e2; }
  .fields select { appearance: none; background-image: linear-gradient(45deg, transparent 50%, #444 50%), linear-gradient(-45deg, transparent 50%, #444 50%); background-size: 2px 2px; background-position: right 3px center, right 1px center; background-repeat: no-repeat; }
  .fields input::placeholder { color: #aaa; font-style: italic; opacity: 1; }
  .swatch { width: 8px; height: 8px; border: 1px solid #444; background: #fff; margin-right: -2px; }
  .links { display: flex; gap: 4px; padding-left: 2px; }
  .links button { gap: 2px; }
  .links .dd { margin-left: 2px; }

  .docs { display: flex; height: 16px; padding: 2px 0 0 10px; border-bottom: 2px solid #f2f2f5; background: #d6d6d6; }
  .doc { height: 12px; padding: 0 6px; width: 60px; justify-content: flex-start; border-radius: 4px 4px 0 0; background: #e0e0e0; color: #777; }
  .doc.on { width: 64px; padding-left: 8px; justify-content: space-between; background: #f6f6f6; color: #222; }
  .add { margin-left: 2px; width: 14px; height: 12px; background: #e0e0e0; }

  .canvas { position: relative; flex: 1; min-height: 400px; overflow: hidden; }
  .scene { position: absolute; inset: 0; width: 100%; height: 100%; }
  .viewlabel { position: absolute; left: 2px; top: 3px; color: #eef0ff; }
  .viewbtns { position: absolute; right: 9px; top: 4px; display: flex; gap: 3px; }
  .edge { position: absolute; inset: 0 0 0 auto; width: 4px; background: #a9c4e4; border-right: 1px solid #3f6070; }
  .cube { position: absolute; right: 10px; top: 34px; width: 70px; display: flex; flex-direction: column; align-items: center; gap: 12px; }
  .cube svg { width: 70px; height: 50px; }
  .cube text { font: bold 5px "Liberation Sans", sans-serif; fill: #70759c; }
  .cube .side { font-size: 4px; }
  .cube button { padding: 0 3px; height: 8px; border-radius: 2px; background: #c3c8f2; color: #8187b8; }
  .cube .dd { border-top-color: #9196c4; }

  .palette { position: absolute; left: 12px; top: 22px; width: 111px; display: grid; gap: 1px; color: #222; }
  .phead { display: flex; align-items: center; gap: 2px; height: 13px; padding: 0 1px; border: 1px solid #555b78; border-radius: 2px; background: linear-gradient(#fff, #e2e2ea); font-size: 8px; line-height: 11px; }
  .phead span { flex: 1; }
  .pbody { display: flex; justify-content: space-between; height: 269px; }
  .cats { display: flex; flex-direction: column; gap: 3px; padding-top: 1px; }
  .cats button { width: 17px; height: 17px; border: 1px solid #888; border-radius: 2px; background: #f5f5f5; box-shadow: 1px 1px 1px #555a90; }
  .cats .on { background: #9ccbf0; border-color: #3c84c0; }
  .parts { position: relative; display: flex; flex-direction: column; gap: 3px; padding: 6px 5px 0 0; width: 87px; border-right: 1px solid #a9b1ee; }
  .parts button { height: 17px; justify-content: flex-start; padding-left: 1px; border: 1px solid #454a86; border-radius: 3px; background: #fbfbfd; color: #111; font: 5px/8px "Noto Sans", sans-serif; }
  .collapse { position: absolute; top: 3px; right: 2px; }

  .preview { position: absolute; left: 126px; top: 64px; width: 96px; height: 270px; padding: 5px 4px 4px; display: flex; flex-direction: column; border: 1px solid #9da5e480; }
  .thumb { width: 88px; height: 124px; margin-left: -1px; border: 1px solid #333; border-radius: 3px; background: #fff; }
  .thumb text { font: 6px "Liberation Sans", sans-serif; fill: #111; }
  .preview hr { width: 96px; margin: 4px 0 5px -5px; border: 0; border-top: 2px solid #c8d2f6; }
  .preview p { flex: 1; width: 88px; margin: 0 0 0 -1px; padding: 1px; border: 1px solid #444; border-radius: 3px; background: #fcfcfc; color: #222; font: 6px/8px Lato, sans-serif; }

  .cmd { position: absolute; left: 20%; right: 20%; bottom: 0; font-family: "DejaVu Sans Mono", monospace; }
  .log { display: flex; flex-direction: column; align-items: flex-start; gap: 2px; padding: 0 0 1px 32px; color: #fafaf0; }
  .log span { background: #3c3c2c99; padding: 0 1px; white-space: pre; line-height: 8px; }
  .log .pad { padding-left: 12px; }
  .cmdbar { display: flex; align-items: center; gap: 4px; height: 13px; margin-left: 1px; padding: 0 3px 0 2px; background: #e2e2f8cc; }
  .cmdbar input { flex: 1; font-family: "Liberation Mono", monospace; font-style: italic; }
  .cmdbar input::placeholder { color: #666; opacity: 1; }
  .cmdbar .dd { margin-left: 1px; }
  .grip { width: 3px; height: 9px; background: repeating-linear-gradient(#666 0 1px, transparent 1px 3px); }
  .up { border: 2px solid transparent; border-bottom-color: #333; border-top: 0; }

  .layout { display: flex; height: 15px; padding-left: 4px; background: #dadada; align-items: flex-start; }
  .lay { height: 10px; padding: 0 5px; background: #e4e4e4; border-radius: 0 0 4px 4px; color: #777; }
  .lay.on { padding: 0 8px; background: #fafafa; color: #222; font-weight: bold; }
  .status { margin-left: auto; display: flex; align-items: center; height: 15px; background: #f1f1f1; padding: 0 1px 0 2px; }
  .status button { width: 12px; height: 11px; }
  .status .wide { width: 13px; }
  .status .thin { width: 8px; }
  .status .act { background: #cfe2f5; border: 1px solid #7ba7d4; }
  .status .model { width: 24px; color: #222; }
  .status .scale { width: 18px; }
  .scale .dd { margin-left: 2px; }

  .task { position: relative; display: flex; align-items: center; height: 20px; background: #2f2f2f; color: #f0f0f0; }
  .apps { display: grid; grid-template-columns: repeat(10, 1fr); width: 245px; height: 20px; }
  .apps button { padding-top: 1px; border-bottom: 1px solid transparent; }
  .apps .run { border-bottom-color: #6fb4ea; }
  .speed { display: flex; flex-direction: column; align-items: flex-end; margin-left: auto; color: #4a9ae0; line-height: 6px; }
  .down { margin: 3px 9px 0 4px; border: 2px solid transparent; border-top-color: #3a86c4; border-bottom: 0; }
  .tray { display: flex; gap: 3px; }
  .lang { margin-left: 4px; }
  time { align-self: flex-end; margin-left: 4px; line-height: 10px; }
  .note { margin: 0 12px 0 9px; }
  .mark { position: absolute; right: 1px; top: -7px; width: 88px; display: flex; justify-content: space-between; color: #ef8b52; font-size: 12px; line-height: 14px; }
  .nexus { border-bottom: 1px solid #a06a48; }
  .mark svg { position: absolute; left: 27px; top: -9px; width: 32px; height: 34px; }
</style>
